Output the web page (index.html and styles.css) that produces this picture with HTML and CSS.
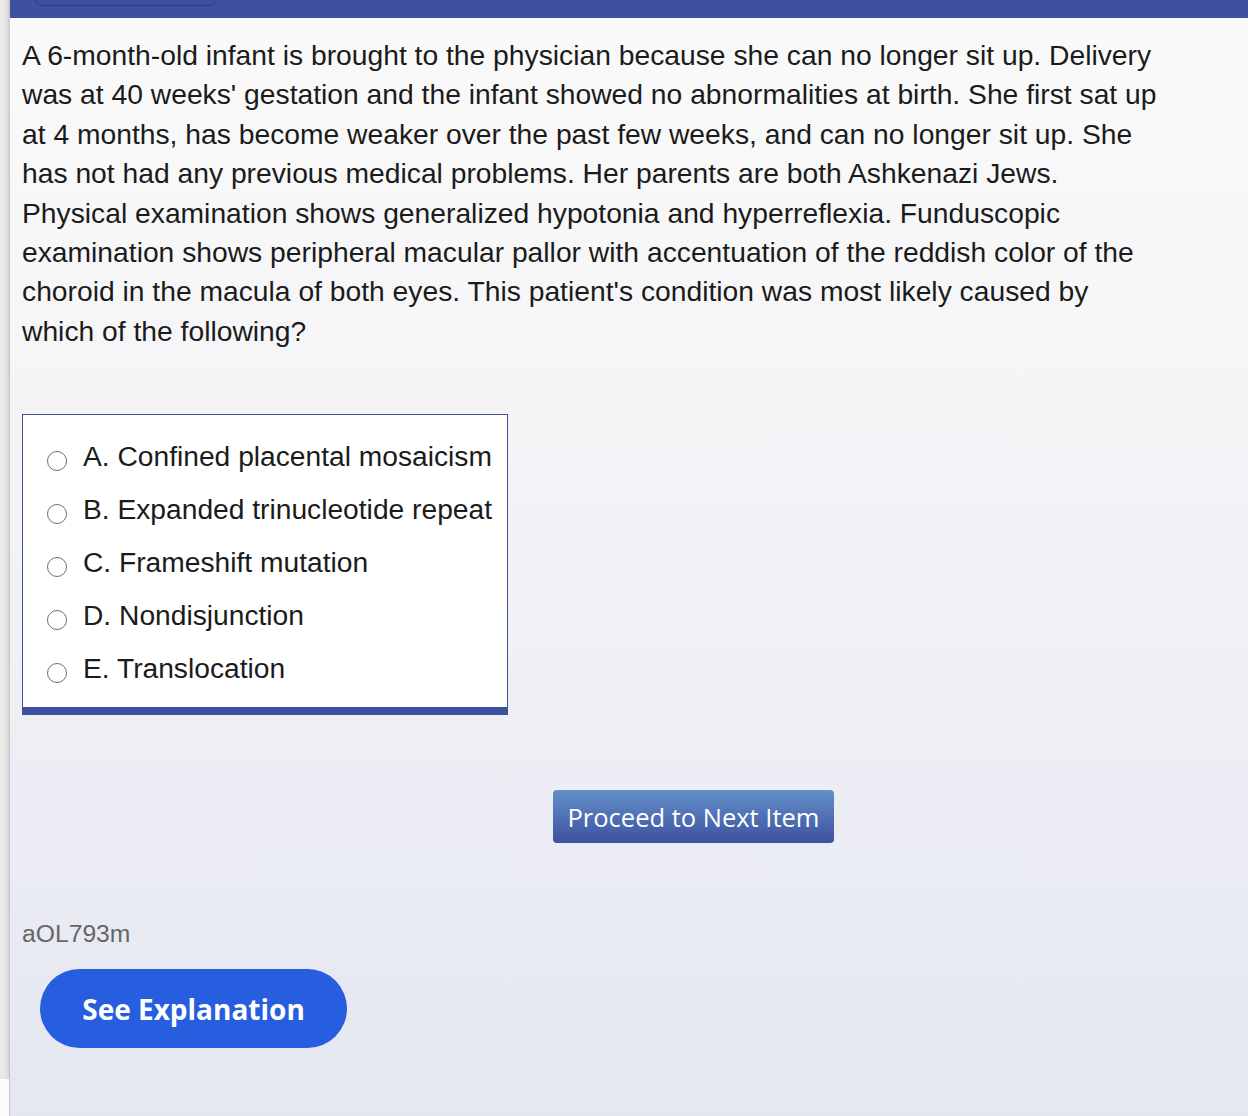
FILE: index.html
```html
<!DOCTYPE html>
<html>
<head>
<meta charset="utf-8">
<link rel="stylesheet" href="styles.css">
</head>
<body>
<div class="page">
  <div class="side">
    <div class="side-top"></div>
    <div class="side-bottom"></div>
  </div>
  <div class="main">
    <div class="topbar">
      <div class="block-btn">Block 1 of 1</div>
    </div>
    <div class="content">
      <p class="stem">A 6-month-old infant is brought to the physician because she can no longer sit up. Delivery was at 40 weeks' gestation and the infant showed no abnormalities at birth. She first sat up at 4 months, has become weaker over the past few weeks, and can no longer sit up. She has not had any previous medical problems. Her parents are both Ashkenazi Jews. Physical examination shows generalized hypotonia and hyperreflexia. Funduscopic examination shows peripheral macular pallor with accentuation of the reddish color of the choroid in the macula of both eyes. This patient's condition was most likely caused by which of the following?</p>
      <div class="answers">
        <div class="option"><span class="radio"></span><span class="opt-text">A. Confined placental mosaicism</span></div>
        <div class="option"><span class="radio"></span><span class="opt-text">B. Expanded trinucleotide repeat</span></div>
        <div class="option"><span class="radio"></span><span class="opt-text">C. Frameshift mutation</span></div>
        <div class="option"><span class="radio"></span><span class="opt-text">D. Nondisjunction</span></div>
        <div class="option"><span class="radio"></span><span class="opt-text">E. Translocation</span></div>
      </div>
      <div class="proceed-row">
        <button class="proceed">Proceed to Next Item</button>
      </div>
      <div class="qid">aOL793m</div>
      <button class="explain">See Explanation</button>
    </div>
  </div>
</div>
</body>
</html>
```
FILE: styles.css
```css
html, body {
  margin: 0;
  padding: 0;
  height: 100%;
}
body {
  font-family: "Liberation Sans", Arial, sans-serif;
  overflow: hidden;
}
.page {
  display: flex;
  height: 1116px;
}
.side {
  width: 9px;
  border-right: 1px solid #c9c9cb;
  display: flex;
  flex-direction: column;
}
.side-top {
  height: 1079px;
  background: linear-gradient(to right, #ececec, #e2e2e2 70%, #d2d2d2);
}
.side-bottom {
  flex: 1;
  background: #fbfbfb;
}
.main {
  flex: 1;
  display: flex;
  flex-direction: column;
  background: linear-gradient(to bottom, #fafafa 0%, #f6f6f8 30%, #eeeff5 65%, #e4e6f1 100%);
}
.topbar {
  height: 18px;
  background: #3d51a0;
  overflow: hidden;
  display: flex;
  padding-left: 25px;
}
.block-btn {
  margin-top: -26px;
  width: 182px;
  height: 32px;
  border: 1px solid #2c3c7e;
  border-radius: 7px;
  color: #fff;
  font-size: 18px;
  line-height: 30px;
  text-align: center;
  box-sizing: border-box;
}
.content {
  padding: 0 0 0 12px;
  display: flex;
  flex-direction: column;
  align-items: flex-start;
}
.stem {
  margin: 18px 0 0 0;
  width: 1140px;
  font-size: 28.25px;
  line-height: 39.4px;
  color: #1b1b1b;
}
.answers {
  margin-top: 63px;
  width: 486px;
  box-sizing: border-box;
  background: #fff;
  border: 1px solid #3d51a0;
  border-bottom: 8px solid #3d51a0;
  padding: 15px 0 12px 0;
}
.option {
  display: flex;
  align-items: center;
  height: 53px;
  padding-left: 24px;
}
.radio {
  width: 18px;
  height: 18px;
  border: 1.8px solid #6f6f6f;
  border-radius: 50%;
  margin-top: 9px;
  flex: none;
}
.opt-text {
  margin-left: 16px;
  font-size: 28.2px;
  color: #1b1b1b;
}
.proceed-row {
  margin-top: 75px;
  padding-left: 531px;
}
.proceed {
  width: 281px;
  height: 53px;
  border: none;
  border-radius: 4px;
  background: linear-gradient(to bottom, #6490c9, #3d51a0);
  color: #fff;
  font-family: "Open Sans", sans-serif;
  font-size: 25.5px;
  font-weight: 400;
  padding: 0;
}
.qid {
  margin-top: 77px;
  font-size: 24.7px;
  line-height: 28px;
  color: #666;
}
.explain {
  margin: 21px 0 0 18px;
  width: 307px;
  height: 79px;
  border: none;
  border-radius: 40px;
  background: #275ee0;
  color: #fff;
  font-family: "Open Sans", sans-serif;
  font-weight: 700;
  font-size: 28px;
  padding: 0;
}
```
